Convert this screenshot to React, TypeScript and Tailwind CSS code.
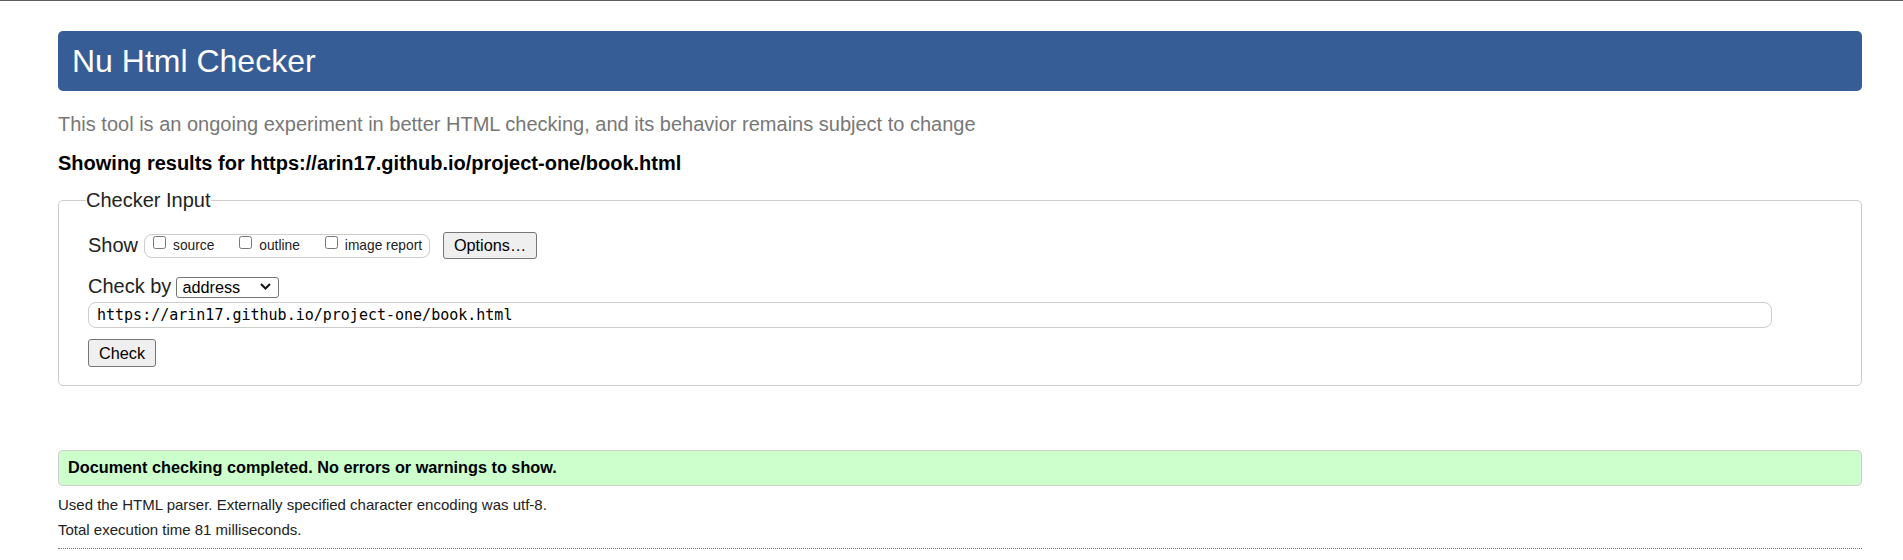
export default function App() {
  const options = ['source', 'outline', 'image report'];

  return (
    <div className="min-h-[560px] bg-white font-['Liberation_Sans',Arial,sans-serif] text-[#222]">
      <div className="h-px bg-[#5f5f5f]" />
      <div className="pl-[58px] pr-[41px]">
        <h1 className="mt-[30px] flex h-[60px] items-center rounded-[5px] bg-[#365d95] px-[14px] text-[32px] leading-[37px] text-white">
          Nu Html Checker
        </h1>

        <p className="mt-[22px] text-[20px] leading-[23px] text-[#777]">
          This tool is an ongoing experiment in better HTML checking, and its behavior remains subject to change
        </p>
        <p className="mt-[16px] text-[20px] font-bold leading-[23px] text-black">
          Showing results for https://arin17.github.io/project-one/book.html
        </p>

        <fieldset className="mt-[14px] rounded-[5px] border border-[#ccc] pb-[18px] pl-[29px] pr-[29px]">
          <legend className="-ml-[2px] text-[20px] leading-[23px]">Checker Input</legend>

          <div className="mt-[20px] flex h-[27px] items-center">
            <span className="text-[20px] leading-[23px]">Show</span>
            <div className="ml-[6px] flex h-[24px] items-start gap-[25px] rounded-[8px] border border-[#ccc] pl-[8px] pr-[7px]">
              {options.map((o) => (
                <label key={o} className="flex items-start gap-[7px]">
                  <input type="checkbox" className="m-0 mt-[1px] h-[13px] w-[13px]" />
                  <span className="mt-[3px] text-[13.75px] leading-[16px]">{o}</span>
                </label>
              ))}
            </div>
            <button className="ml-[13px] h-[27px] w-[94px] rounded-[3px] border border-[#767676] bg-[#efefef] text-[16.25px] leading-[19px] text-black">
              Options…
            </button>
          </div>

          <div className="mt-[16px] flex items-baseline gap-[5px]">
            <span className="text-[20px] leading-[23px]">Check by</span>
            <div className="relative">
              <select
                defaultValue="address"
                className="h-[21px] w-[103px] appearance-none rounded-[3px] border border-[#767676] bg-white pl-[5px] text-[16.25px] leading-[19px] text-black"
              >
                <option value="address">address</option>
                <option value="file">file upload</option>
                <option value="text">text input</option>
              </select>
              <svg
                className="pointer-events-none absolute right-[8px] top-[7px]"
                width="11"
                height="7"
                viewBox="0 0 11 7"
                fill="none"
              >
                <path d="M1 1l4.5 4.5L10 1" stroke="#111" strokeWidth="2" />
              </svg>
            </div>
          </div>

          <input
            readOnly
            value="https://arin17.github.io/project-one/book.html"
            className="mt-[2px] block h-[26px] w-[1684px] rounded-[8px] border border-[#ccc] px-[8px] font-['DejaVu_Sans_Mono',monospace] text-[15px] text-black"
          />

          <button className="mt-[11px] block h-[28px] w-[68px] rounded-[3px] border border-[#767676] bg-[#efefef] text-[16.25px] leading-[19px] text-black">
            Check
          </button>
        </fieldset>

        <div className="mt-[64px] rounded-[5px] border border-[#ccc] bg-[#ccffcc] pb-[8px] pl-[9px] pt-[7px] text-[16.25px] font-bold leading-[19px] text-black">
          Document checking completed. No errors or warnings to show.
        </div>

        <p className="mt-[10px] text-[15px] leading-[17px]">
          Used the HTML parser. Externally specified character encoding was utf-8.
        </p>
        <p className="mt-[8px] text-[15px] leading-[17px]">Total execution time 81 milliseconds.</p>
        <div className="mt-[10px] border-t border-dotted border-[#777]" />
      </div>
    </div>
  );
}
